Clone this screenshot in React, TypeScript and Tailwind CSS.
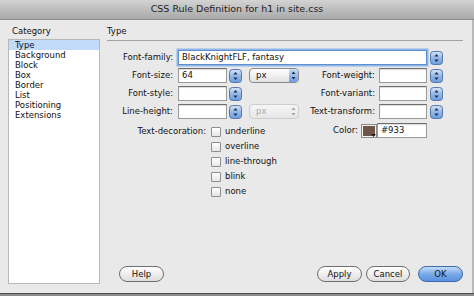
import React from "react";

function Stepper() {
  return (
    <svg width="13" height="14" viewBox="0 0 13 14" className="shrink-0">
      <defs>
        <linearGradient id="stg" x1="0" y1="0" x2="0" y2="1">
          <stop offset="0" stopColor="#d6e5f8" />
          <stop offset="0.5" stopColor="#93b8e8" />
          <stop offset="1" stopColor="#6a9cdf" />
        </linearGradient>
      </defs>
      <rect x="0.5" y="0.5" width="12" height="13" rx="3" fill="url(#stg)" stroke="#5677aa" />
      <path d="M6.5 3 L8.6 5.6 L4.4 5.6Z" fill="#1c2c4c" />
      <path d="M6.5 11 L8.6 8.4 L4.4 8.4Z" fill="#1c2c4c" />
    </svg>
  );
}

function Arrows({ color }: { color: string }) {
  return (
    <svg width="7" height="11" viewBox="0 0 7 11">
      <path d="M3.5 1.5 L5.5 4 L1.5 4Z" fill={color} />
      <path d="M3.5 9.5 L5.5 7 L1.5 7Z" fill={color} />
    </svg>
  );
}

function Select({ disabled }: { disabled?: boolean }) {
  if (disabled) {
    return (
      <div className="h-[15px] w-[50px] shrink-0 rounded-[4px] border border-[#cdcdcd] bg-gradient-to-b from-[#f6f6f6] to-[#e6e6e6] flex items-center text-[#aaaaaa]">
        <span className="flex-1 pl-[6px] leading-none">px</span>
        <div className="w-[9px] h-full flex items-center justify-center">
          <Arrows color="#a0a0a0" />
        </div>
      </div>
    );
  }
  return (
    <div className="h-[15px] w-[50px] shrink-0 rounded-[4px] border border-[#8a8a8a] bg-gradient-to-b from-white to-[#e2e2e2] flex items-center text-[#111]">
      <span className="flex-1 pl-[6px] leading-none">px</span>
      <div className="w-[9px] h-full rounded-r-[3px] bg-gradient-to-b from-[#c9dcf5] to-[#6c9de0] flex items-center justify-center">
        <Arrows color="#1c2c4c" />
      </div>
    </div>
  );
}

function Input({ w, value, focus }: { w: string; value?: string; focus?: boolean }) {
  return (
    <div
      className={`${w} h-[15px] shrink-0 bg-white border ${
        focus
          ? "border-[#5f8fcf] shadow-[0_0_0_1.5px_#8db6ea]"
          : "border-[#9a9a9a] border-t-[#6f6f6f] shadow-[inset_0_1px_1px_rgba(0,0,0,0.15)]"
      } flex items-center pl-[3px] text-[#111] leading-none whitespace-nowrap overflow-hidden`}
    >
      {value}
    </div>
  );
}

function Label({ w, children }: { w: string; children: React.ReactNode }) {
  return <div className={`${w} shrink-0 text-right text-[#111] whitespace-nowrap`}>{children}</div>;
}

function Checkbox({ label }: { label: string }) {
  return (
    <div className="h-[15px] flex items-center">
      <div className="w-[10px] h-[10px] border border-[#8e8e8e] rounded-[1px] bg-gradient-to-b from-white to-[#e6e6e6]" />
      <span className="ml-[4px] text-[#111]">{label}</span>
    </div>
  );
}

function Button({ label, primary, w }: { label: string; primary?: boolean; w: string }) {
  return (
    <div
      className={`${w} h-[16px] rounded-full border flex items-center justify-center text-[#111] ${
        primary
          ? "border-[#3d6aa8] bg-gradient-to-b from-[#c3dbf7] via-[#79aae8] to-[#5a92e0]"
          : "border-[#6e6e6e] bg-gradient-to-b from-white to-[#dedede]"
      }`}
    >
      {label}
    </div>
  );
}

export default function App() {
  const items = ["Type", "Background", "Block", "Box", "Border", "List", "Positioning", "Extensions"];
  return (
    <div className="w-[474px] h-[296px] overflow-hidden bg-[#b9b9b9] font-['DejaVu_Sans',sans-serif] text-[8.5px] flex flex-col">
      <div className="h-[20px] shrink-0 bg-gradient-to-b from-[#d3d3d3] to-[#a9a9a9] border-b border-[#8d8d8d] flex items-center justify-center text-[9.5px] text-[#222]">
        CSS Rule Definition for h1 in site.css
      </div>
      <div className="flex h-[273px] w-[472px] shrink-0 bg-[#e9e9e9] pl-[8px] pr-[9px] pb-[9px]">
        <div className="w-[92px] shrink-0 flex flex-col pt-[5px]">
          <div className="h-[12px] leading-[12px] pl-[4px] text-[#111]">Category</div>
          <div className="mt-[2px] flex-1 bg-white border border-[#b8b8b8]">
            {items.map((it, i) => (
              <div
                key={it}
                className={`h-[10px] leading-[10px] pl-[6px] text-[#111] ${i === 0 ? "bg-[#c3dbfb]" : ""}`}
              >
                {it}
              </div>
            ))}
          </div>
        </div>
        <div className="ml-[7px] w-[356px] shrink-0 flex flex-col pt-[5px]">
          <div className="h-[12px] leading-[12px] text-[#111]">Type</div>
          <div className="mt-[3px] h-[1px] bg-[#a2a2a2]" />
          <div className="mt-[9px] flex flex-col gap-[3px]">
            <div className="h-[15px] flex items-center">
              <Label w="w-[66px]">Font-family:</Label>
              <div className="ml-[5px]"><Input w="w-[249px]" value="BlackKnightFLF, fantasy" focus /></div>
              <div className="ml-[3px]"><Stepper /></div>
            </div>
            <div className="h-[15px] flex items-center">
              <Label w="w-[66px]">Font-size:</Label>
              <div className="ml-[5px]"><Input w="w-[49px]" value="64" /></div>
              <div className="ml-[2px]"><Stepper /></div>
              <div className="ml-[7px]"><Select /></div>
              <Label w="w-[76px]">Font-weight:</Label>
              <div className="ml-[4px]"><Input w="w-[48px]" /></div>
              <div className="ml-[3px]"><Stepper /></div>
            </div>
            <div className="h-[15px] flex items-center">
              <Label w="w-[66px]">Font-style:</Label>
              <div className="ml-[5px]"><Input w="w-[49px]" /></div>
              <div className="ml-[2px]"><Stepper /></div>
              <div className="ml-[7px] w-[50px]" />
              <Label w="w-[76px]">Font-variant:</Label>
              <div className="ml-[4px]"><Input w="w-[48px]" /></div>
              <div className="ml-[3px]"><Stepper /></div>
            </div>
            <div className="h-[15px] flex items-center">
              <Label w="w-[66px]">Line-height:</Label>
              <div className="ml-[5px]"><Input w="w-[49px]" /></div>
              <div className="ml-[2px]"><Stepper /></div>
              <div className="ml-[7px]"><Select disabled /></div>
              <Label w="w-[76px]">Text-transform:</Label>
              <div className="ml-[4px]"><Input w="w-[48px]" /></div>
              <div className="ml-[3px]"><Stepper /></div>
            </div>
            <div className="flex items-start">
              <div className="w-[220px] shrink-0 flex items-start">
                <div className="h-[15px] mt-[2px] flex items-center">
                  <Label w="w-[99px]">Text-decoration:</Label>
                </div>
                <div className="ml-[5px] flex flex-col pt-[2px]">
                  <Checkbox label="underline" />
                  <Checkbox label="overline" />
                  <Checkbox label="line-through" />
                  <Checkbox label="blink" />
                  <Checkbox label="none" />
                </div>
              </div>
              <div className="h-[15px] mt-[1px] flex items-center">
                <Label w="w-[31px]">Color:</Label>
                <div className="ml-[3px] w-[16px] h-[14px] border border-[#8a8a8a] bg-[#f4f4f4] p-[1px] relative">
                  <div className="w-full h-full bg-[#6f5548]" />
                  <svg width="5" height="3" viewBox="0 0 5 3" className="absolute right-[0px] bottom-[0px]">
                    <path d="M0 0 L5 0 L2.5 3Z" fill="#222" />
                  </svg>
                </div>
                <Input w="w-[50px]" value="#933" />
              </div>
            </div>
          </div>
          <div className="mt-auto mb-[2px] flex items-center">
            <div className="ml-[12px]"><Button w="w-[45px]" label="Help" /></div>
            <div className="flex-1" />
            <Button w="w-[45px]" label="Apply" />
            <div className="ml-[4px]"><Button w="w-[44px]" label="Cancel" /></div>
            <div className="ml-[8px]"><Button w="w-[45px]" label="OK" primary /></div>
          </div>
        </div>
      </div>
      <div className="flex-1 border-t border-[#4e4e4e] bg-[#8c8c8c]" />
    </div>
  );
}
